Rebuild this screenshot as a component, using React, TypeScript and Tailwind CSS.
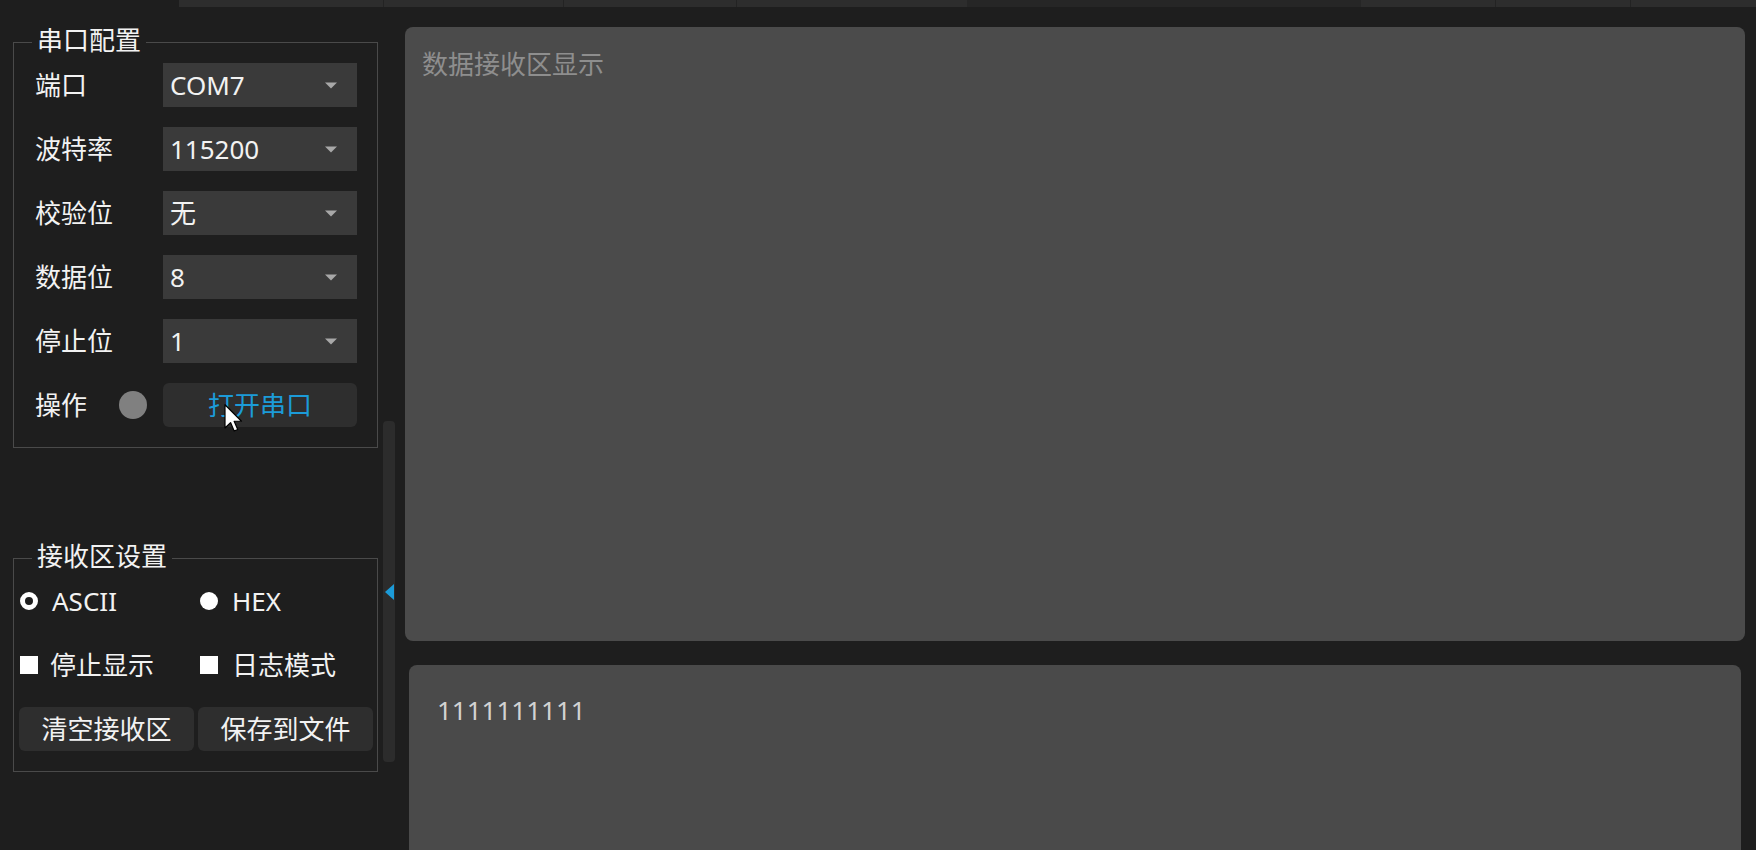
import React from "react";

function Arrow() {
  return (
    <svg width="12" height="7" viewBox="0 0 12 7" className="shrink-0">
      <polygon points="0,0.5 12,0.5 6,6.5" fill="#a8a8a8" />
    </svg>
  );
}

function Combo({ value }: { value: string }) {
  return (
    <div className="w-[194px] h-[44px] bg-[#3a3a3a] flex items-center justify-between pl-[7px] pr-[20px]">
      <span className="leading-[30px]">{value}</span>
      <Arrow />
    </div>
  );
}

function GroupBox({ title, children, className }: { title: string; children: React.ReactNode; className?: string }) {
  return (
    <div className={"relative border border-[#4a4a4a] " + (className ?? "")}>
      <span className="absolute left-[18px] top-[-18px] px-[5px] bg-[#1e1e1e] leading-[30px] whitespace-nowrap">
        {title}
      </span>
      {children}
    </div>
  );
}

export default function App() {
  const rows: [string, string][] = [
    ["端口", "COM7"],
    ["波特率", "115200"],
    ["校验位", "无"],
    ["数据位", "8"],
    ["停止位", "1"],
  ];
  return (
    <div className="relative w-[1756px] h-[850px] overflow-hidden bg-[#1e1e1e] text-[#f2f2f2] text-[26px] flex flex-col [font-family:'Noto_Sans','Noto_Sans_CJK_SC',sans-serif]">
      {/* top strip */}
      <div className="flex h-[7px] shrink-0">
        <div className="w-[179px] bg-[#1e1e1e]" />
        <div className="w-[205px] bg-[#2d2d2d] border-r border-[#232323]" />
        <div className="w-[180px] bg-[#2d2d2d] border-r border-[#232323]" />
        <div className="w-[173px] bg-[#2d2d2d] border-r border-[#232323]" />
        <div className="w-[230px] bg-[#2d2d2d]" />
        <div className="w-[394px] bg-[#262626]" />
        <div className="w-[135px] bg-[#2d2d2d] border-r border-[#232323]" />
        <div className="w-[135px] bg-[#2d2d2d] border-r border-[#232323]" />
        <div className="flex-1 bg-[#2d2d2d]" />
      </div>

      <div className="flex flex-1 min-h-0">
        {/* left column */}
        <div className="ml-[13px] w-[365px] shrink-0 flex flex-col pt-[35px]">
          <GroupBox title="串口配置">
            <div className="flex flex-col gap-[20px] pl-[21px] pr-[20px] py-[20px]">
              {rows.map(([label, value]) => (
                <div key={label} className="flex items-center h-[44px]">
                  <span className="w-[128px] leading-[30px]">{label}</span>
                  <Combo value={value} />
                </div>
              ))}
              <div className="flex items-center h-[44px]">
                <span className="w-[84px] leading-[30px]">操作</span>
                <div className="w-[28px] h-[28px] rounded-full bg-[#808080]" />
                <div className="ml-[16px] w-[194px] h-[44px] rounded-[6px] bg-[#2e2e2e] flex items-center justify-center text-[#1c9bd8] leading-[30px]">
                  打开串口
                </div>
              </div>
            </div>
          </GroupBox>

          <GroupBox title="接收区设置" className="mt-[110px]">
            <div className="flex flex-col gap-[20px] pt-[20px] pb-[20px]">
              <div className="grid grid-cols-[180px_1fr] h-[44px] pl-[6px] items-center">
                <div className="flex items-center gap-[14px]">
                  <div className="w-[18px] h-[18px] rounded-full border-[5px] border-white bg-[#1e1e1e]" />
                  <span className="leading-[30px]">ASCII</span>
                </div>
                <div className="flex items-center gap-[14px]">
                  <div className="w-[18px] h-[18px] rounded-full bg-white" />
                  <span className="leading-[30px]">HEX</span>
                </div>
              </div>
              <div className="grid grid-cols-[180px_1fr] h-[44px] pl-[6px] items-center">
                <div className="flex items-center gap-[12px]">
                  <div className="w-[18px] h-[18px] bg-white" />
                  <span className="leading-[30px]">停止显示</span>
                </div>
                <div className="flex items-center gap-[14px]">
                  <div className="w-[18px] h-[18px] bg-white" />
                  <span className="leading-[30px]">日志模式</span>
                </div>
              </div>
              <div className="grid grid-cols-2 gap-[4px] pl-[5px] pr-[4px] h-[44px]">
                <div className="rounded-[6px] bg-[#2e2e2e] flex items-center justify-center leading-[30px]">清空接收区</div>
                <div className="rounded-[6px] bg-[#2e2e2e] flex items-center justify-center leading-[30px]">保存到文件</div>
              </div>
            </div>
          </GroupBox>
        </div>

        {/* splitter */}
        <div className="ml-[5px] w-[12px] shrink-0 mt-[414px] h-[341px] rounded-[4px] bg-[#2c2c2c] flex items-center pl-[2px]">
          <svg width="9" height="16" viewBox="0 0 9 16">
            <polygon points="9,0 9,16 0,8" fill="#1c9bd8" />
          </svg>
        </div>

        {/* right column */}
        <div className="ml-[10px] w-[1340px] shrink-0 flex flex-col pt-[20px]">
          <div className="h-[614px] shrink-0 rounded-[8px] bg-[#4b4b4b] pl-[17px] pt-[18px]">
            <span className="leading-[30px] text-[#8e8e8e]">数据接收区显示</span>
          </div>
          <div className="mt-[24px] mx-[4px] h-[240px] shrink-0 rounded-[8px] bg-[#4a4a4a] pl-[28px] pt-[26px]">
            <span className="leading-[30px] text-[#d2d2d2]">1111111111</span>
          </div>
        </div>
      </div>

      {/* mouse cursor */}
      <svg className="absolute left-[224px] top-[404px]" width="20" height="30" viewBox="0 0 13 20">
        <path d="M0.5,0.5 L0.5,16 L4.2,12.4 L6.6,18 L9,17 L6.6,11.5 L11.5,11.5 Z" fill="#ffffff" stroke="#000000" strokeWidth="0.8" strokeLinejoin="round" />
      </svg>
    </div>
  );
}
